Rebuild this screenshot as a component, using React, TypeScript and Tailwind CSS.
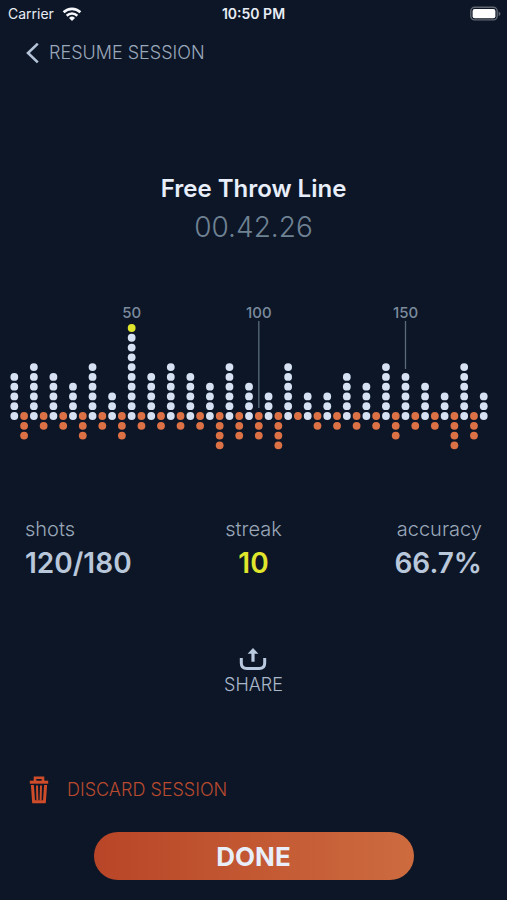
const MADES = [
  5, 6, 5, 4, 6, 3, 10, 5, 6, 5, 4, 6, 4, 3, 6, 3, 3, 5, 4, 6, 5, 4, 3, 6, 3,
];
const MISSES = [
  3, 2, 2, 3, 2, 3, 2, 2, 2, 2, 4, 3, 3, 4, 1, 2, 2, 2, 2, 3, 2, 2, 4, 3,
];
const BEST_STREAK = Math.max(...MADES);

// Every dot sits on a square grid
const STEP = 9.78;
const RADIUS = 3.9;
const START_X = 14.3;
const BASELINE = 116;

const MARKERS = [
  { label: "50", column: 12 },
  { label: "100", column: 25, lineEnd: 108 },
  { label: "150", column: 40, lineEnd: 69 },
];

const columnX = (column: number) => START_X + column * STEP;

const range = (length: number) => Array.from({ length }, (_, i) => i);

const StatusBar = () => (
  <div className="grid grid-cols-3 items-center h-7 px-2 text-sm text-[#e8edf5]">
    <div className="flex items-center gap-2">
      <span>Carrier</span>
      <svg width="20" height="15" viewBox="0 0 20 15" aria-hidden="true">
        <g fill="none" stroke="#f5f7fa" strokeWidth="2.6">
          <path d="M1.6 5.3a12 12 0 0 1 16.8 0" />
          <path d="M4.7 8.7a7.6 7.6 0 0 1 10.6 0" />
        </g>
        <path d="M10 14l-3-3.1a4.3 4.3 0 0 1 6 0z" fill="#f5f7fa" />
      </svg>
    </div>
    <span className="text-center font-semibold">10:50 PM</span>
    <svg
      className="justify-self-end"
      width="29"
      height="16"
      viewBox="0 0 29 16"
      overflow="visible"
      aria-hidden="true"
    >
      <rect
        x="0.8"
        y="1.3"
        width="26.4"
        height="12.6"
        rx="3.8"
        fill="none"
        stroke="#626873"
        strokeWidth="1.4"
      />
      <rect x="2.6" y="3" width="22.8" height="9.2" rx="2" fill="#fff" />
      <path d="M28.6 5.4c2.4 1 2.4 3.6 0 4.6z" fill="#626873" />
    </svg>
  </div>
);

const ShotChart = () => (
  <svg
    className="w-full"
    viewBox="0 0 507 155"
    role="img"
    aria-label="Made and missed shots"
  >
    {MARKERS.map(({ label, column, lineEnd }) => (
      <g key={label}>
        <text
          x={columnX(column)}
          y={18}
          textAnchor="middle"
          className="text-[15px] font-medium fill-[#7b8b9d]"
        >
          {label}
        </text>
        {lineEnd && (
          <line
            x1={columnX(column)}
            x2={columnX(column)}
            y1={21}
            y2={lineEnd}
            stroke="#5a6a7c"
            strokeWidth={1.3}
          />
        )}
      </g>
    ))}
    {MADES.map((count, index) =>
      range(count).map((dot) => (
        <circle
          key={`made-${index}-${dot}`}
          cx={columnX(index * 2)}
          cy={BASELINE - dot * STEP}
          r={RADIUS}
          fill={dot === BEST_STREAK - 1 ? "#e0e62c" : "#d6e2f3"}
        />
      ))
    )}
    {MISSES.map((count, index) =>
      range(count).map((dot) => (
        <circle
          key={`miss-${index}-${dot}`}
          cx={columnX(index * 2 + 1)}
          cy={BASELINE + dot * STEP}
          r={RADIUS}
          fill="#dc7146"
        />
      ))
    )}
  </svg>
);

export default function App() {
  return (
    <div className="min-h-screen flex flex-col bg-[#0d1626] font-['Inter',sans-serif]">
      <StatusBar />
      <header className="px-[25px] pt-[9px]">
        <button
          type="button"
          className="flex items-center gap-2 h-8 text-lg font-light text-[#9aa8bb]"
        >
          <svg width="16" height="22" viewBox="0 0 16 22" aria-hidden="true">
            <path
              d="M12.8 1.6L3 11l9.8 9.4"
              fill="none"
              stroke="#b4c3d8"
              strokeWidth="2.6"
            />
          </svg>
          RESUME SESSION
        </button>
      </header>
      <main className="flex-1 flex flex-col">
        <div className="pt-26 text-center">
          <h1 className="text-2xl leading-8 font-semibold text-[#e8eefa]">
            Free Throw Line
          </h1>
          <p className="pt-1 text-[28px] leading-9 font-light text-[#6f8294]">
            00.42.26
          </p>
        </div>
        <div className="pt-[55px]">
          <ShotChart />
        </div>
        <dl className="grid grid-cols-3 px-[25px] pt-15">
          <div>
            <dt className="text-xl leading-7 font-light text-[#99a7b9]">
              shots
            </dt>
            <dd className="text-[28px] leading-10 font-semibold text-[#b9c7db]">
              120/180
            </dd>
          </div>
          <div className="text-center">
            <dt className="text-xl leading-7 font-light text-[#99a7b9]">
              streak
            </dt>
            <dd className="text-[28px] leading-10 font-semibold text-[#e0e62c]">
              10
            </dd>
          </div>
          <div className="text-right">
            <dt className="text-xl leading-7 font-light text-[#99a7b9]">
              accuracy
            </dt>
            <dd className="text-[28px] leading-10 font-semibold text-[#b9c7db]">
              66.7%
            </dd>
          </div>
        </dl>
        <button
          type="button"
          className="self-center flex flex-col items-center mt-16 text-lg leading-7 font-light text-[#aab8cc]"
        >
          <svg width="28" height="24" viewBox="0 0 28 24" aria-hidden="true">
            <path
              d="M2.3 11v5q0 5.5 5.5 5.5h12.4q5.5 0 5.5-5.5v-5"
              fill="none"
              stroke="#b9c9df"
              strokeWidth="3"
            />
            <path d="M14 1l5.4 5.8h-3.8v8h-3.2v-8H8.6z" fill="#b9c9df" />
          </svg>
          SHARE
        </button>
      </main>
      <footer className="flex flex-col px-[25px] pb-5">
        <button
          type="button"
          className="self-start flex items-center gap-4 pl-1 h-9 text-lg font-light text-[#b74a2f]"
        >
          <svg width="22" height="28" viewBox="0 0 22 28" aria-hidden="true">
            <g fill="none" stroke="#cf4c2a">
              <path d="M6 5V1.8h8V5" strokeWidth="2.6" />
              <path d="M0.8 6.2h18.4" strokeWidth="3" />
              <path d="M3.4 9l1.2 16.8h10.8L16.6 9" strokeWidth="3" />
              <path d="M8 9.5l.4 15M12 9.5l-.4 15" strokeWidth="2" />
            </g>
          </svg>
          DISCARD SESSION
        </button>
        <button
          type="button"
          className="self-center w-80 h-12 mt-6 rounded-full bg-linear-to-r from-[#b84527] to-[#cd6b3f] text-[26px] font-bold text-[#e8eefa]"
        >
          DONE
        </button>
      </footer>
    </div>
  );
}
